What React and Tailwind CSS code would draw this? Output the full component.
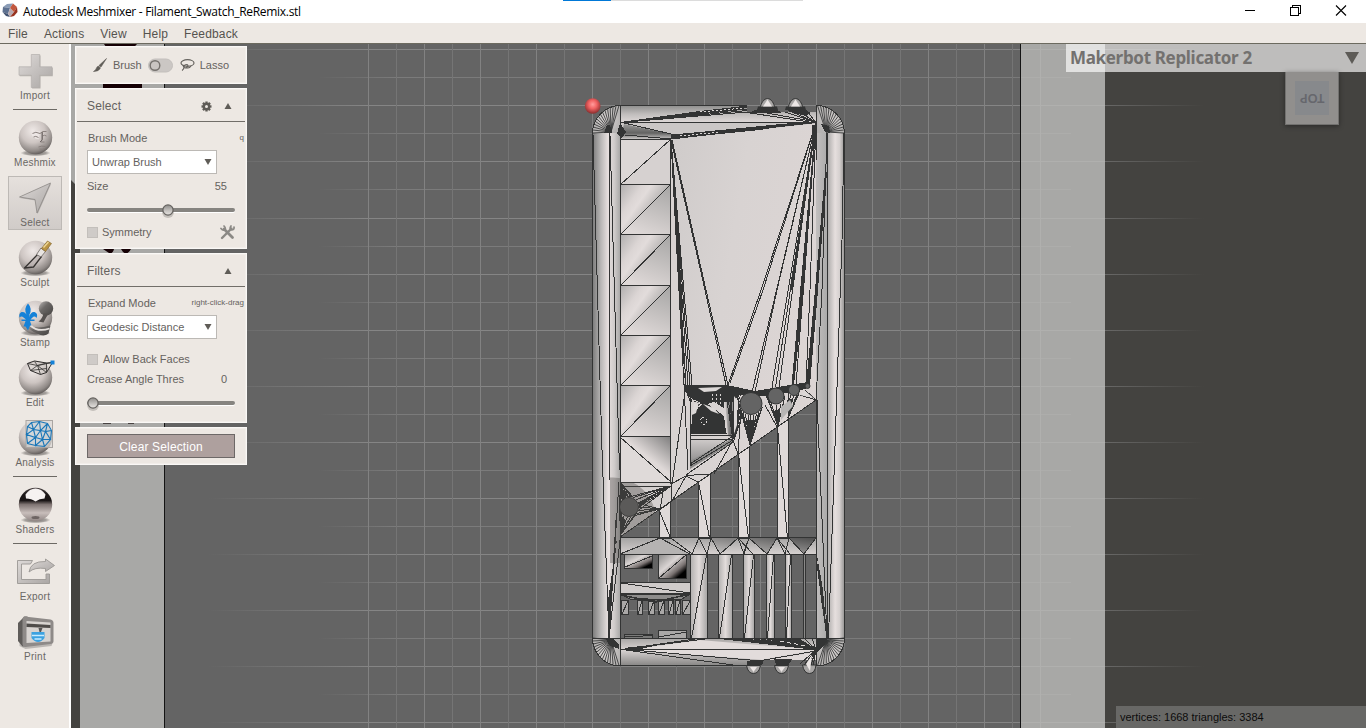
import React from "react";

const INK = "#333434";

/* ---------- mesh helpers ---------- */
const seg = (a) => `M${a[0]} ${a[1]}` + a.slice(2).reduce((s, v, i) => s + (i % 2 ? ` ${v}` : `L${v}`), "");

// n lines from one apex to evenly spaced points between (x1,y1) and (x2,y2)
const fan = (ax, ay, x1, y1, x2, y2, n) => {
  let d = "";
  for (let i = 0; i <= n; i++) {
    const t = i / n;
    d += `M${ax} ${ay}L${(x1 + (x2 - x1) * t).toFixed(1)} ${(y1 + (y2 - y1) * t).toFixed(1)}`;
  }
  return d;
};

// lines from an apex to points on an arc
const arcFan = (ax, ay, cx, cy, r, a0, a1, n) => {
  let d = "";
  for (let i = 0; i <= n; i++) {
    const a = ((a0 + ((a1 - a0) * i) / n) * Math.PI) / 180;
    d += `M${ax} ${ay}L${(cx + r * Math.cos(a)).toFixed(1)} ${(cy + r * Math.sin(a)).toFixed(1)}`;
  }
  return d;
};

const cellTops = [139.5, 184.5, 234.5, 285.5, 335.5, 385.5, 436.5];

const lines = [
  // side rails
  [593, 134, 602, 450, 609, 638],
  [609.5, 133, 609.5, 480],
  [610, 135, 619.5, 470],
  [620.5, 106, 620.5, 666],
  [619, 482, 609, 638],
  [616, 520, 609, 638],
  [620, 540, 609, 638],
  [827.5, 133, 827.5, 638],
  [827, 133, 822, 290, 816, 400],
  [844, 133, 842, 240, 828.5, 638],
  [816.5, 384, 816.5, 666],
  [817, 400, 827, 638],
  [816.5, 560, 827, 638],
  [816.5, 106, 816.5, 160],
  // top bar
  [620, 105.5, 747, 105.5],
  [620, 122.5, 816, 122.5],
  [620, 122, 671, 134],
  [625, 135, 671, 139],
  [620, 139.5, 671, 139.5],
  [747, 112.5, 816, 123],
  [764, 112.5, 816, 122],
  [670.5, 139, 670.5, 484],
  // face
  [671, 140, 705, 290, 726, 385],
  [672, 140, 706, 290, 728, 385],
  [816, 123, 761, 290, 728, 385],
  [816, 123, 763, 290, 730, 383],
  [816, 123, 779, 280, 752, 392],
  [816, 123, 777, 290, 755, 392],
  [816, 123, 810, 290, 806, 384],
  // lower left of the face
  [684, 384, 688, 470],
  [690.5, 390, 690.5, 466],
  [686, 385, 672, 484],
  [690, 439.5, 733, 439.5],
  [690, 435.5, 733, 435.5],
  [690, 466, 733, 440],
  [690, 464, 733, 436],
  [686, 475, 733, 442],
  [733, 440, 714, 474],
  [620, 482.5, 671, 482.5],
  [620, 486.5, 671, 486.5],
  [671, 484, 686, 476, 698, 482],
  [686, 475.5, 710, 474],
  [671, 482, 671, 502],
  [686, 476, 672, 501],
  [620, 437, 671, 482],
  [733, 440, 738, 454],
  [816, 400, 620, 537],
  [660, 510, 664, 486],
  [777, 427, 765, 405],
  [805, 390, 816, 400],
  [800, 395, 816, 400],
  [741, 410, 738, 454],
  // horizontal band
  [620, 537.5, 816, 537.5],
  [620, 554.5, 816, 554.5],
  [620, 554, 660, 538, 690, 554],
  [671, 538, 692, 554, 699, 538, 707, 554, 711, 538, 720, 554, 738, 538, 744, 554, 749, 538, 767, 554, 777, 538, 785, 554, 789, 538, 804, 554, 816, 538],
  [711, 538, 707, 554],
  [738, 538, 753, 554],
  [749, 538, 743, 554],
  [777, 538, 790, 554],
  [720, 554, 735, 541],
  // bottom bar
  [592, 638.5, 844, 638.5],
  [620, 649.5, 816, 649.5],
  [625, 649, 709, 638.5],
  [625, 649, 699, 638.5],
  [626, 650, 740, 666],
  [632, 650, 762, 661],
  [620, 665.5, 747, 665.5],
  [747, 665.5, 764, 660, 816, 651],
];

const upperStruts = [
  [659.5, 670.5, 510, 502],
  [698.5, 710.5, 482, 474],
  [738.5, 749.5, 454, 447],
  [777.5, 788.5, 427, 419],
];
const lowerStruts = [
  [690.5, 707.5],
  [718.5, 732.5],
  [743.5, 754.5],
  [766.5, 774.5],
  [785.5, 791.5],
];
const teeth = [
  [621, 628],
  [637, 642],
  [648, 654],
  [658, 664],
  [668, 673],
  [675, 680],
  [682, 690],
];

const cornerFans = [
  arcFan(611, 132, 620, 133, 27.5, 180, 268, 14),
  arcFan(826, 132, 816.5, 133, 27.5, -88, 0, 14),
  arcFan(611, 640, 620, 638, 27.5, 92, 180, 14),
  arcFan(826, 640, 816.5, 638, 27.5, 0, 88, 14),
].join("");

const denseFans = [
  // slivers in the top bar
  fan(620, 122.5, 747, 106, 747, 112, 4),
  fan(816, 122.5, 671, 135, 671, 139, 4),
  fan(816, 122.5, 785, 112, 816, 113, 4),
  // long face slivers
  fan(671, 140, 684, 385, 692, 385, 4),
  fan(816, 122.5, 772, 387, 779, 387, 2),
  fan(816, 122.5, 792, 385, 796, 385, 1),
  // around the round holes
  arcFan(750, 445, 751, 403, 12, 20, 160, 10),
  arcFan(735, 388, 751, 403, 12, 160, 270, 8),
  arcFan(778, 426, 776, 396, 9, 0, 180, 6),
  arcFan(788, 418, 794, 390, 6, 0, 160, 5),
  arcFan(765, 392, 776, 396, 9, 120, 250, 6),
  arcFan(734, 440, 751, 403, 12, 130, 190, 5),
  arcFan(671, 486, 629, 507, 10, -90, 20, 5),
  arcFan(621, 483, 629, 507, 10, 180, 300, 7),
  arcFan(621, 534, 629, 507, 10, 40, 180, 7),
  arcFan(660, 509, 629, 507, 10, -20, 60, 4),
  // inner pocket
  fan(690, 388, 700, 400, 733, 392, 10),
  fan(728, 386, 690, 396, 700, 410, 7),
  fan(733, 440, 726, 395, 735, 392, 5),
  fan(684, 384, 691, 404, 697, 394, 5),
  // slivers in the bottom bar
  fan(816, 649.5, 720, 638.5, 812, 638.5, 12),
  fan(816, 649.5, 800, 664, 812, 673, 4),
].join("");

function Mesh() {
  return (
    <g>
      {/* surfaces */}
      <path d="M592.5 133A28 28 0 0 1 620 105.5H621V134Z" fill="url(#corner)" />
      <path d="M844.5 133A28 28 0 0 0 816 105.5V134Z" fill="url(#corner)" />
      <path d="M592.5 638A28 28 0 0 0 620 666H621V638Z" fill="url(#corner)" />
      <path d="M844.5 638A28 28 0 0 1 816 666V638Z" fill="url(#corner)" />
      <rect x="592" y="133" width="18" height="506" fill="url(#railL)" />
      <rect x="610" y="133" width="11" height="506" fill="url(#railL2)" />
      <rect x="816" y="133" width="12" height="506" fill="url(#railR2)" />
      <rect x="827" y="133" width="18" height="506" fill="url(#railR)" />
      <path d="M620 105H747V112H816V123H620Z" fill="url(#topBar)" />
      <path d="M620 123H816L671 139H620Z" fill="#cbc7c6" />
      <path d="M624 124L671 134V139H620Z" fill="url(#notch)" />
      <path d="M671 139L816 123V400L620 537V482H671Z" fill="url(#face)" />
      <path d="M671 140H672L690 385L686 476L671 484Z" fill="#d8d3d2" />
      <path d="M690 440H733L690 466Z" fill="url(#pocket)" />
      <path d="M690 461L733 438L732 443L690 469Z" fill="#8a8988" />
      <path d="M724 388H735V438L728 436Z" fill="url(#fold)" />
      {cellTops.map((y, i) => {
        const b = i < 6 ? cellTops[i + 1] : 482;
        return i < 6 ? (
          <g key={y}>
            <rect x="620.5" y={y} width="50" height={b - y} fill={i ? "url(#cellB)" : "#d6d1d0"} />
            <path d={`M620.5 ${y}H670.5L620.5 ${b}Z`} fill={i ? "url(#cellA)" : "#dcd7d6"} />
          </g>
        ) : (
          <g key={y}>
            <rect x="620.5" y={y} width="50" height={b - y} fill="#dfdad9" />
            <path d={`M620.5 ${y}H670.5V${b}Z`} fill="url(#cellC)" />
          </g>
        );
      })}
      <rect x="620" y="538" width="196" height="16" fill="url(#band)" />
      <path d="M620 554L660 538L690 554Z" fill="#b5b3b2" />
      <path d="M749 538H777L767 554ZM711 538H738L720 554ZM789 538H816L804 554Z" fill="url(#facet)" />
      <rect x="620" y="638" width="196" height="22" fill="url(#bottomBar)" />
      <path d="M620 650H816V652L764 660L747 666H620Z" fill="url(#bottomLow)" />
      <path d="M628 650L700 640L816 650L762 660Z" fill="#e2dcdb" />

      {/* lines */}
      <path d={cornerFans} stroke={INK} strokeWidth="0.85" fill="none" />
      <g stroke={INK} fill="none" strokeWidth="1" shapeRendering="crispEdges">
        {upperStruts.map(([a, b, ya, yb]) => (
          <g key={a}>
            <path d={`M${a} ${ya}L${b} ${yb}V538H${a}Z`} fill="#dfd9d8" />
            <path d={a < 660 ? `M${a} 511L${b} 538` : `M${a} ${ya}L${b - 1} 538`} />
          </g>
        ))}
        {lowerStruts.map(([a, b]) => (
          <g key={a}>
            <rect x={a} y="554.5" width={b - a} height="84" fill="url(#strut)" />
            <path d={`M${b - 1} 555L${a + 1} 638`} />
          </g>
        ))}
        <path d="M803.500 555V638M805.500 555V638" />
        <path d="M804.500 555V638" stroke="#8a8988" />
        {teeth.map(([a, b]) => (
          <g key={a}>
            <rect x={a + 0.5} y="600.5" width={b - a} height="14" fill="#aaa8a7" />
            <path d={`M${b} 601L${a + 1} 614`} />
          </g>
        ))}
        <rect x="624.5" y="554.5" width="28" height="14" fill="url(#shade)" />
        <path d="M625 567L652 556" />
        <rect x="658.5" y="554.5" width="28" height="24" fill="url(#shade)" />
        <path d="M659 578L686 555" />
        <rect x="620.5" y="582.5" width="70" height="11" fill="#cfcbca" />
        <path d="M621 583L690 593" />
        <path d="M620 594H690L682 599H630Z" fill="#8d8c8b" />
        <path d="M621 595L640 599L664 600L690 594M640 599L655 602L672 599" strokeWidth="1.6" />
        <rect x="624.5" y="634.5" width="28" height="4" fill="#7b7b7a" />
        <path d="M625 637L652 635.5" />
        <rect x="658.5" y="630.5" width="28" height="8" fill="#aaa8a7" />
        <path d="M659 637L686 632" />
        {cellTops.map((y, i) => (
          <path key={y} d={i < 6 ? `M620.5 ${y}H670.5L620.5 ${cellTops[i + 1]}` : `M620.5 ${y}H670.5`} />
        ))}
        {lines.map((l, i) => (
          <path key={i} d={seg(l)} />
        ))}
        <path d={denseFans} />
        <path d="M592.5 638V133A28 28 0 0 1 620 105.5M844.5 638V133A28 28 0 0 0 816 105.5M592.5 638A28 28 0 0 0 620 666M844.5 638A28 28 0 0 1 816 666" />
      </g>

      {/* densely triangulated parts */}
      <g fill={INK} stroke="none" shapeRendering="crispEdges">
        <path d="M671 148L672 148L680 260L685 385L681 330L677 260Z" />
        <path d="M642 119L700 111L744 106L744 109L700 114L660 120Z" />
        <path d="M680 134L812 121L760 130L671 139Z" />
        <path d="M620 123L626 132L622 138L617 134Z" />
        <path d="M607 125L610 125L612 133L604 133Z" />
        <path d="M812 125H816L815 142L813 144Z" />
        <path d="M825 132L821 124L829 126L830 133Z" />
        <path d="M605 638H612L619 645V649L610 646Z" />
        <path d="M816 638H828L824 646L817 652Z" />
        <path d="M815 130L789.500 290H792.500Z" />
        <path d="M815.500 135L801 290L792 385H794L804 290Z" />
        <path d="M825 172H827L818 290L810 385H806L815 290Z" />
        <path d="M685 385H727L755 391L808 382V388L795 392L765 396L740 395L732 402H724V408L714 402L704 405L690 397Z" />
        <path d="M692 414L705 402L724 416L726 432L727 434H691Z" />
        <path d="M746 420L749 445L756 420Z" />
        <path d="M774 411L778 425L779 409Z" />
        <path d="M787 400L789 418L792 399Z" />
        <path d="M620 485L627 495L622 504Z" />
        <path d="M638 503L665 489L648 500L640 507Z" />
        <path d="M621 516L626 520L621 533Z" />
        <path d="M730 403L733 418L733 436L731 418Z" />
        <path d="M617 538L611 600L609 636L608 600Z" />
        <path d="M817 555L821 600L827 636L823 590Z" />
        <path d="M624 648L668 643L631 651Z" />
        <path d="M765 639H800L808 644L815 650Z" />
        <path d="M758 109L776 109L782 113H748Z" />
        <path d="M786 109L804 109L811 113L806 116L790 112Z" />
        <path d="M747 661L764 660L762 665H747Z" />
        <path d="M774 659H792L788 666H777Z" />
      </g>
      <g fill="#dcd8d7" stroke="none">
        <path d="M698 388L722 387L716 391L704 392ZM703 404L714 408L719 414L711 411ZM694 404L699 402L696 413L692 415ZM734 396L737 400L737 425L734 434Z" />
        <path d="M781 407L790 400L793 406L781 420Z" fill="#b7b5b4" />
        <path d="M805 391L814 398L800 395Z" />
      </g>
      <g stroke="#d9d5d4" strokeWidth="1" fill="none" strokeDasharray="2 2" shapeRendering="crispEdges">
        <path d="M702 417L708 420L704 425L700 421Z" />
        <path d="M712 394V404M716 394V405M720 394V404" />
        <path d="M700 112L744 108M680 136L720 132" />
        <path d="M780 641L806 646" strokeDasharray="4 3" />
      </g>

      {/* small nubs on the upper and lower edges */}
      <g stroke={INK}>
        <path d="M760 108.500C761 103 764 98.500 767.500 98.500S774 103 775 108.500Z" fill="#a8a6a5" />
        <path d="M788 108.500C789 103 792 98.500 795.500 98.500S802 103 803 108.500Z" fill="#a8a6a5" />
        <path d="M746.500 665.500H760.500Q759 673.500 753.500 673.500T746.500 665.500Z" fill="#a8a6a5" />
        <path d="M774.500 665.500H788.500Q787 673.500 781.500 673.500T774.500 665.500Z" fill="#a8a6a5" />
        <path d="M802.500 665H816Q815 673.500 809.500 673.500T802.500 665Z" fill="#a8a6a5" />
      </g>
      <path d="M758 106.500H777L778 110H757ZM786 106.500H805L806 110H785Z" fill={INK} />
      <path d="M767.500 99.500L772 106.500H763ZM795.500 99.500L800 106.500H791ZM750 667H757L753.500 672ZM778 667H785L781.500 672ZM806 664L812 655L810 671Z" fill="#ebe6e5" />

      {/* holes seen through the plate */}
      <g fill="#646464" stroke={INK}>
        <circle cx="751" cy="403.5" r="11" />
        <circle cx="776" cy="396" r="8" />
        <circle cx="794" cy="390" r="5.5" />
        <circle cx="807.5" cy="386" r="2.5" />
        <circle cx="629" cy="507" r="9.5" />
      </g>

      {/* brush footprint */}
      <circle cx="613" cy="520.5" r="43" fill="#4a4846" fillOpacity="0.36" clipPath="url(#brushArea)" />
    </g>
  );
}

function Stop({ o, c, a = 1 }) {
  return <stop offset={o} stopColor={c} stopOpacity={a} />;
}

function Scene() {
  const hs = Array.from({ length: 25 }, (_, i) => Math.round(49.2 + i * 28.05));
  const vs = Array.from({ length: 25 }, (_, i) => Math.round(368 + i * 27.98));
  return (
    <svg className="absolute inset-0 h-full w-full" viewBox="71 44 1295 684" preserveAspectRatio="none">
      <defs>
        <linearGradient id="major" gradientUnits="userSpaceOnUse" x1="208" y1="0" x2="1204" y2="0">
          <Stop o="0" c="#858585" a={0} /><Stop o=".16" c="#858585" /><Stop o=".82" c="#858585" /><Stop o="1" c="#858585" a={0} />
        </linearGradient>
        <linearGradient id="minor" gradientUnits="userSpaceOnUse" x1="318" y1="0" x2="1090" y2="0">
          <Stop o="0" c="#7b7b7b" a={0} /><Stop o=".1" c="#7b7b7b" /><Stop o=".9" c="#7b7b7b" /><Stop o="1" c="#7b7b7b" a={0} />
        </linearGradient>
        <linearGradient id="railL"><Stop o="0" c="#777" /><Stop o=".5" c="#b9b7b6" /><Stop o=".9" c="#e7e0df" /></linearGradient>
        <linearGradient id="railL2"><Stop o="0" c="#dfd9d8" /><Stop o=".4" c="#cfcbca" /><Stop o="1" c="#a3a2a1" /></linearGradient>
        <linearGradient id="railR2"><Stop o="0" c="#c2bfbe" /><Stop o="1" c="#a9a9a9" /></linearGradient>
        <linearGradient id="railR"><Stop o="0" c="#a9a8a7" /><Stop o=".45" c="#e6dfde" /><Stop o=".7" c="#d5d0cf" /><Stop o="1" c="#8d8c8b" /></linearGradient>
        <linearGradient id="topBar" x2="0" y2="1"><Stop o="0" c="#8b8b8a" /><Stop o=".5" c="#c0bdbc" /><Stop o="1" c="#e0dad9" /></linearGradient>
        <linearGradient id="notch" x2="0" y2="1"><Stop o="0" c="#9a9998" /><Stop o=".6" c="#636362" /><Stop o="1" c="#c9c6c5" /></linearGradient>
        <linearGradient id="face" x2="1" y2=".35"><Stop o="0" c="#c9c6c5" /><Stop o=".6" c="#d8d3d2" /><Stop o="1" c="#dcd5d4" /></linearGradient>
        <linearGradient id="cellA" x2="1" y2=".7"><Stop o="0" c="#b0aeae" /><Stop o=".3" c="#dbd5d4" /><Stop o=".42" c="#e2dcdb" /><Stop o=".72" c="#aeacab" /></linearGradient>
        <linearGradient id="cellB" x1=".8" y1="0" x2=".4" y2="1"><Stop o="0" c="#a9a8a7" /><Stop o="1" c="#ded8d7" /></linearGradient>
        <linearGradient id="cellC" x1="1" y1="0" x2=".3" y2=".8"><Stop o="0" c="#7f7e7e" /><Stop o=".6" c="#dfd9d8" /></linearGradient>
        <linearGradient id="pocket" x2="0" y2="1"><Stop o="0" c="#cdc9c8" /><Stop o="1" c="#858484" /></linearGradient>
        <linearGradient id="fold"><Stop o="0" c="#dcd7d6" /><Stop o=".6" c="#6d6c6c" /><Stop o="1" c="#c6c3c2" /></linearGradient>
        <linearGradient id="band" x2="0" y2="1"><Stop o="0" c="#a5a4a3" /><Stop o="1" c="#d6d1d0" /></linearGradient>
        <linearGradient id="facet" x1="0" y1="1" x2="1" y2="0"><Stop o="0" c="#c8c5c4" /><Stop o="1" c="#4e4e4e" /></linearGradient>
        <linearGradient id="bottomBar" x2="0" y2="1"><Stop o="0" c="#a6a4a3" /><Stop o=".6" c="#dfd9d8" /></linearGradient>
        <linearGradient id="bottomLow" x2="0" y2="1"><Stop o="0" c="#d8d3d2" /><Stop o="1" c="#858483" /></linearGradient>
        <linearGradient id="strut"><Stop o="0" c="#b2b0af" /><Stop o=".5" c="#e2dcdb" /><Stop o="1" c="#a5a4a3" /></linearGradient>
        <linearGradient id="shade" x2="1" y2="1"><Stop o="0" c="#8b8a89" /><Stop o=".4" c="#dad5d4" /><Stop o=".66" c="#77706f" /><Stop o=".82" c="#000" /></linearGradient>
        <radialGradient id="corner"><Stop o="0" c="#dcd7d6" /><Stop o="1" c="#b4b2b1" /></radialGradient>
        <radialGradient id="red" cx=".5" cy=".4" r=".58"><Stop o="0" c="#ff9c9c" /><Stop o=".45" c="#f26464" /><Stop o="1" c="#8d2f2f" /></radialGradient>
        <clipPath id="brushArea"><path d="M610 470H620V482H671V502L620 537V563H610Z" /></clipPath>
      </defs>
      <rect x="71" y="44" width="1295" height="684" fill="#444340" />
      <path d="M71 44H164V728H80V189L71 180Z" fill="#a8a8a6" />
      <path d="M104 44H137Q134 48 130 48H110Q106 48 104 44ZM103 84H142V88H103ZM103 249H114Q113 254 109 253ZM121 249H131Q127 256 123 252Z" fill="#150004" />
      <path d="M103 422H111V424H103ZM128 422H134V424H128Z" fill="#4a4443" />
      <rect x="164" y="44" width="857" height="684" fill="#141414" />
      <rect x="165" y="44" width="855" height="684" fill="#646464" />
      {hs.map((y, i) => (
        <rect key={y} x={i % 2 ? 318 : 208} y={y} width={i % 2 ? 772 : 996} height="1" fill={i % 2 ? "url(#minor)" : "url(#major)"} />
      ))}
      {vs.map((x, i) => (
        <rect key={x} x={x} y="44" width="1" height="684" fill={i % 2 ? "#757575" : "#828282"} />
      ))}
      <rect x="1021" y="44" width="84" height="684" fill="#a8a8a6" />
      {hs.map((y, i) => (
        <rect key={y} x="1021" y={y} width={i % 2 ? 50 : 84} height="1" fill={i % 2 ? "#adadab" : "#b0b0ae"} />
      ))}
      <rect x="1040" y="44" width="1" height="684" fill="#b0b0ae" />
      <rect x="1020" y="44" width="1" height="684" fill="#141414" />
      <Mesh />
      <circle cx="592.7" cy="106" r="7.8" fill="url(#red)" />
    </svg>
  );
}

/* ---------- toolbar icons ---------- */
function IconDefs() {
  return (
    <svg className="absolute h-0 w-0">
      <defs>
        <radialGradient id="ball" cx=".42" cy=".3" r=".72"><Stop o="0" c="#efe9e7" /><Stop o=".5" c="#cdc5c2" /><Stop o=".85" c="#8f8986" /><Stop o="1" c="#5f5a58" /></radialGradient>
        <linearGradient id="steel" x2="1" y2="1"><Stop o="0" c="#dedad8" /><Stop o="1" c="#aaa6a4" /></linearGradient>
        <linearGradient id="dark" x2="1" y2="1"><Stop o="0" c="#bdb9b7" /><Stop o=".4" c="#6c6967" /><Stop o="1" c="#454341" /></linearGradient>
        <linearGradient id="chrome" x2="0" y2="1"><Stop o="0" c="#4c4444" /><Stop o=".2" c="#1b1616" /><Stop o=".38" c="#1b1616" /><Stop o=".5" c="#7f7472" /><Stop o=".75" c="#c8bebb" /><Stop o="1" c="#8f8583" /></linearGradient>
        <linearGradient id="knob" x2="0" y2="1"><Stop o="0" c="#8f8d8a" /><Stop o=".6" c="#c8c5c2" /><Stop o="1" c="#e8e5e2" /></linearGradient>
        <radialGradient id="shadow"><Stop o="0" c="#4e4a48" a={0.75} /><Stop o=".7" c="#4e4a48" a={0.45} /><Stop o="1" c="#4e4a48" a={0} /></radialGradient>
      </defs>
    </svg>
  );
}

function Ball({ children, fill = "url(#ball)" }) {
  return (
    <svg className="block shrink-0" width="44" height="40" viewBox="-0.500 -1.500 44 40">
      <ellipse cx="22" cy="33.500" rx="15" ry="3.200" fill="url(#shadow)" />
      <circle cx="22" cy="18" r="16.700" fill={fill} />
      {children}
    </svg>
  );
}

const Flat = ({ children }) => (
  <svg className="block shrink-0" width="44" height="40" viewBox="-0.500 -1 44 40">{children}</svg>
);

const icons = {
  Import: (
    <Flat>
      <path d="M17.800 2.500H26.200V14.800H38.500V23.200H26.200V35.500H17.800V23.200H5.500V14.800H17.800Z" transform="translate(.8 1)" fill="#8d8986" opacity=".55" />
      <path d="M17.800 2.500H26.200V14.800H38.500V23.200H26.200V35.500H17.800V23.200H5.500V14.800H17.800Z" fill="url(#steel)" stroke="#b3afac" strokeWidth=".7" />
    </Flat>
  ),
  Meshmix: (
    <Ball>
      <path d="M18 15Q21 10 27 12L25 20L22 19Q19 18 18 15Z" fill="#efe9e7" opacity=".8" />
      <path d="M19 14Q22 11.500 26.500 14Q29 11 33 12M20 17.500Q22 16 25 18M29 12.500V20L27 22.500H31M29 16.500Q31 15 33 16.500M25 27.500Q28 26 32 27M26 29.500Q29 30.500 31 29" fill="none" stroke="#8a817e" strokeWidth="1" />
      <path d="M28.500 13V20.500L26.500 22.500" stroke="#6f6866" fill="none" />
    </Ball>
  ),
  Select: (
    <Flat>
      <path d="M37 4L6 18L21.500 20.500L23.500 34Z" transform="translate(.6 1)" fill="#8a8683" opacity=".5" />
      <path d="M37 4L6 18L21.500 20.500L23.500 34Z" fill="url(#steel)" stroke="#8c8885" strokeWidth=".8" strokeLinejoin="round" />
    </Flat>
  ),
  Sculpt: (
    <Ball>
      <path d="M11 28.500L25 14L28 17L20 27.500Z" fill="#b6aeab" fillOpacity=".6" stroke="#373432" strokeWidth="1.300" strokeLinejoin="round" />
      <path d="M23 15L27.500 8.500L32 12L27.500 17.500Z" fill="#e8e4e1" stroke="#6a6562" strokeWidth=".8" />
      <path d="M28 9L34 1.500L38 4L32 12Z" fill="#b99345" stroke="#7c5f25" strokeWidth=".6" />
      <path d="M30 8L35 2.500" stroke="#eed795" strokeWidth="1.400" />
    </Ball>
  ),
  Stamp: (
    <Ball>
      <circle cx="32.500" cy="9" r="7.200" fill="url(#dark)" />
      <path d="M30 14L35 14Q32 19 30 23L25 22Q29 19 30 14Z" fill="#55514f" />
      <path d="M15 24Q20 31 37 26L35 34Q30 38 24 34Q16 31 13 26Z" fill="url(#dark)" />
      <path d="M17 26Q24 33 36 29" stroke="#e5e0dd" strokeWidth="1.800" fill="none" />
      <path d="M14.500 4Q10 9 13 15L14 18Q13 12 8 12.500Q5 14 6 18Q8 16 10 18L12.500 20H8V21.500H12L10 27H12L14.500 31L16.500 26H18L16.500 21.500H21V20H17L19 18Q21 16 23 18.500Q25 14 21 12.500Q17 12 15.500 18L16 15Q19 9 14.500 4Z" fill="#1582d8" />
    </Ball>
  ),
  Edit: (
    <Ball>
      <path d="M14 4L21 1.500L33 3.500L39 3L33 13L27 15L17 11Z" fill="#d5cfcc" fillOpacity=".5" stroke="#302e2d" strokeWidth="1" />
      <path d="M14 4L24 6L39 3M21 2L24 6L33 3.500M24 6L17 11M24 6L27 15M24 6L33 13M33 3.500L33 13M17 11L33 9" fill="none" stroke="#302e2d" strokeWidth=".8" />
      <rect x="37" y="1" width="4" height="4" fill="#1582d8" />
    </Ball>
  ),
  Analysis: (
    <Ball>
      <rect x="12.500" y="1" width="26.500" height="27" fill="#dcd8d5" fillOpacity=".7" stroke="#a9a5a2" />
      <circle cx="25.500" cy="14.500" r="12" fill="#c7d3dc" fillOpacity=".5" />
      <path d="M18 3L26 2L34 4L38 11L37 20L31 27L22 26L14 24L13 15L14 7ZM18 3L20 10L14 7M26 2L27 11L20 10L13 15L22 18L27 11L34 4M34 4L32 12L38 11M27 11L32 12L37 20L29 20L27 11M22 18L29 20L31 27M22 18L22 26L29 20M22 18L14 24M20 10L26 2M32 12L29 20M20 10L22 18" fill="none" stroke="#1976b8" strokeWidth="1.100" />
    </Ball>
  ),
  Shaders: (
    <Ball fill="url(#chrome)">
      <path d="M12 8Q16 2 22 2Q28 2 32 8L31 12Q26 12 22 15Q18 12 12.500 12Z" fill="#f6f2f1" />
      <ellipse cx="22" cy="31" rx="4" ry="1.500" fill="#6d6462" />
    </Ball>
  ),
  Export: (
    <Flat>
      <path d="M19 7.500H4V30.500H36V21H32.500V26.500H8V11H17Z" fill="url(#steel)" stroke="#9b9794" strokeWidth=".9" />
      <path d="M15.500 19Q17 8 32 8.500V6L41 12.500L32 18.500V15.500Q21 14 15.500 19Z" fill="url(#steel)" stroke="#9b9794" strokeWidth=".9" />
    </Flat>
  ),
  Print: (
    <Flat>
      <path d="M6 33L12 36L38 33L39 30H6Z" fill="#8a8683" opacity=".5" />
      <path d="M4.500 10L11 3.500H14V33L9 33.500L4.500 28Z" fill="#5f5c5a" />
      <path d="M11 3.500L37 6.500Q40 7 40 10V28Q40 30.500 37 31L12 34Q9 34 9 31V7Q9 3.500 11 3.500Z" fill="#8e8a88" />
      <path d="M13 8L37 9.500V28.500L13 30Z" fill="#d8d4d1" />
      <path d="M13 10.500L37 12V15L13 14Z" fill="#4f4c4a" />
      <path d="M25 15H29L27.500 19H26Z" fill="#555" />
      <path d="M18 19H31V25Q28 29 24.500 29T18 25Z" fill="#3da2e0" />
      <path d="M18.500 22.500H30.500M21 26H28" stroke="#c8ecff" strokeWidth="1.400" />
    </Flat>
  ),
};

function Tool({ name, active, cls = "h-[60px]" }) {
  return (
    <div className={`flex w-full flex-col items-center ${cls}`}>
      <div className={`flex h-[54px] w-[54px] flex-col items-center pt-[2px] ${active ? "bg-gradient-to-b from-[#e6e1dd] to-[#d0cbc8] outline outline-1 -outline-offset-1 outline-[#bdb9b5]" : ""}`}>
        {icons[name]}
        <span className="-mt-[1px] whitespace-nowrap pl-px text-[10px] leading-[11px] tracking-[0.25px] text-[#6a6764]">{name}</span>
      </div>
    </div>
  );
}

const Rule = () => <div className="h-px w-[44px] shrink-0 bg-[#6c6964]" />;

function Sidebar() {
  return (
    <nav className="flex w-[71px] shrink-0 flex-col items-center border-r-2 border-white bg-[#ede8e3] pt-[5px]">
      <Tool name="Import" cls="h-[60px]" />
      <Rule />
      <Tool name="Meshmix" cls="mt-[6px] h-[60px]" />
      <Tool name="Select" active />
      <Tool name="Sculpt" />
      <Tool name="Stamp" />
      <Tool name="Edit" />
      <Tool name="Analysis" />
      <Rule />
      <Tool name="Shaders" cls="mt-[6px] h-[60px]" />
      <Rule />
      <Tool name="Export" cls="mt-[6px] h-[60px]" />
      <Tool name="Print" />
    </nav>
  );
}

/* ---------- property panels ---------- */
const Down = () => (
  <svg width="8" height="8" viewBox="0 0 8 8"><path d="M.5 1H7.500L4 7Z" fill="#5f5c57" /></svg>
);
const Up = () => (
  <svg width="8" height="8" viewBox="0 0 8 8"><path d="M.5 7H7.500L4 1Z" fill="#5f5c57" /></svg>
);

function Combo({ children }) {
  return (
    <div className="flex h-6 w-[130px] items-center justify-between border border-[#bcb9b5] bg-white pl-1 pr-1">
      <span>{children}</span>
      <Down />
    </div>
  );
}

function Slider({ value }) {
  return (
    <div className="flex h-4 w-[148px] items-center">
      <div className="relative h-1 w-full rounded-full bg-[#868480] shadow-[0_1px_0_#fff]">
        <svg className="absolute -top-[5px] overflow-visible" style={{ left: value }} width="12" height="14" viewBox="0 0 12 14">
          <ellipse cx="6" cy="9" rx="6" ry="6" fill="#6a6764" opacity=".3" />
          <circle cx="6" cy="7" r="5.100" fill="url(#knob)" stroke="#65625f" strokeWidth="1.200" />
        </svg>
      </div>
    </div>
  );
}

const Box = () => <div className="h-[11px] w-[11px] border border-[#c3bfbb] bg-[#cfcbc8]" />;
const panel = "w-[172px] shrink-0 border border-[#faf8f6] bg-[#ede8e3] shadow-[inset_0_0_0_1px_#f2eeea]";

function Panels() {
  return (
    <div className="absolute left-[4px] top-[2px] flex flex-col text-[11px] leading-[14px] text-[#65625e]">
      <section className={`${panel} mb-[4px] flex h-[38px] items-center pl-[17px]`}>
        <svg className="mr-[6px]" width="14" height="14" viewBox="0 0 14 14">
          <path d="M13.500 .5L8 9L6 7.500ZM5.500 8L7.500 10Q6 13.500 .5 13.500Q3 12 3.500 10Q4 8.500 5.500 8Z" fill="#5f5c57" stroke="#5f5c57" strokeWidth=".6" />
        </svg>
        <span>Brush</span>
        <svg className="ml-[6px] mr-[7px]" width="25" height="15" viewBox="0 0 25 15">
          <rect x=".5" y="1" width="24" height="13" rx="6.500" fill="#cbc7c4" stroke="#c3bfbc" />
          <circle cx="7" cy="7.500" r="4.800" fill="#c9c5c2" stroke="#75726e" strokeWidth="1.400" />
        </svg>
        <svg className="mr-[5px]" width="15" height="12" viewBox="0 0 15 12" fill="none" stroke="#65625e" strokeWidth="1.200">
          <ellipse cx="7.500" cy="4" rx="6.500" ry="3.300" />
          <path d="M3 6Q4 10 6.500 8.500Q9 6.500 7 5.500Q4 5.500 4 8Q4 10.500 2 11.500M6 8.500Q9 10 11 7" />
        </svg>
        <span>Lasso</span>
      </section>

      <section className={`${panel} mb-[4px] flex h-[161px] flex-col`}>
        <div className="mx-[1px] flex h-[33px] shrink-0 items-center border-b border-[#716e69] pl-[10px] pr-[13px] pt-[2px] text-[12px]">
          <span className="flex-1 tracking-[0.15px]">Select</span>
          <svg className="mr-[12px]" width="11" height="11" viewBox="-5.500 -5.500 11 11">
            <g fill="#5f5c57">
              {[0, 45, 90, 135].map((a) => (
                <rect key={a} x="-1.200" y="-5" width="2.400" height="10" transform={`rotate(${a})`} />
              ))}
              <circle r="3.700" />
            </g>
            <circle r="1.500" fill="#ede8e3" />
          </svg>
          <Up />
        </div>
        <div className="mt-[9px] flex h-[14px] shrink-0 items-center justify-between pl-[12px] pr-[2px]">
          <span>Brush Mode</span><span className="text-[8px]">q</span>
        </div>
        <div className="mt-[5px] pl-[11px]"><Combo>Unwrap Brush</Combo></div>
        <div className="mt-[5px] flex justify-between pl-[11px] pr-[19px]"><span>Size</span><span>55</span></div>
        <div className="mt-[9px] pl-[11px]"><Slider value={75} /></div>
        <div className="mt-[6px] flex h-4 items-center pl-[11px] pr-[11px]">
          <Box /><span className="ml-[4px] flex-1">Symmetry</span>
          <svg width="15" height="15" viewBox="0 0 15 15" fill="none" stroke="#8b8985" strokeLinecap="round">
            <path d="M4 4L12.500 12.500" strokeWidth="2.800" />
            <path d="M11.500 3.500L2 13" strokeWidth="2.400" />
            <path d="M1 3.500Q3 6 5 4.500Q6 3 4 1M14 2Q14.500 5 11.500 5Q9 4 11 1" strokeWidth="1.700" />
          </svg>
        </div>
      </section>

      <section className={`${panel} mb-[4px] flex h-[170px] flex-col`}>
        <div className="mx-[1px] flex h-[33px] shrink-0 items-center border-b border-[#716e69] pl-[10px] pr-[13px] pt-[2px] text-[12px]">
          <span className="flex-1 tracking-[0.15px]">Filters</span><Up />
        </div>
        <div className="mt-[9px] flex h-[14px] shrink-0 items-center justify-between pl-[12px] pr-[2px]">
          <span>Expand Mode</span><span className="text-[8px]">right-click-drag</span>
        </div>
        <div className="mt-[5px] pl-[11px]"><Combo>Geodesic Distance</Combo></div>
        <div className="mt-[12px] flex h-4 items-center pl-[11px]"><Box /><span className="ml-[5px]">Allow Back Faces</span></div>
        <div className="mt-[5px] flex justify-between pl-[11px] pr-[19px]"><span>Crease Angle Thres</span><span>0</span></div>
        <div className="mt-[9px] pl-[11px]"><Slider value={0} /></div>
      </section>

      <section className={`${panel} flex h-[38px] items-center justify-center`}>
        <button className="h-6 w-[148px] border border-[#6d6867] bg-[#aea09e] pt-[2px] text-[12px] tracking-[0.15px] text-white">Clear Selection</button>
      </section>
    </div>
  );
}

export default function App() {
  return (
    <div className="flex h-[728px] w-[1366px] flex-col overflow-hidden bg-[#ede8e3] font-['Liberation_Sans',Arial,sans-serif]">
      <IconDefs />
      <header className="relative flex h-[23px] shrink-0 items-center bg-white pl-[2px]">
        <div className="absolute left-[563px] top-0 flex h-px w-[240px] bg-[#dcdcdc]"><div className="w-[48px] bg-[#0078d7]" /></div>
        <svg className="mr-[5px] -mt-[2px]" width="16" height="15" viewBox="0 0 16 15">
          <path d="M5 1L11 .500L8 5L1 4Z" fill="#8a9cb6" /><path d="M1 4L8 5L6 11L.500 9Z" fill="#5e7190" />
          <path d="M.500 9L6 11L8 14L4 13Z" fill="#40516f" /><path d="M8 5L12 9L8 14L6 11Z" fill="#b7aab0" />
          <path d="M11 .500L15 4L12 9L8 5Z" fill="#c3583f" /><path d="M15 4L15.500 9L12 13L8 14L12 9Z" fill="#983320" />
        </svg>
        <span className="flex-1 pt-px font-['Open_Sans','Noto_Sans',sans-serif] text-[12px] leading-[22px] tracking-[-0.3px] text-black">Autodesk Meshmixer - Filament_Swatch_ReRemix.stl</span>
        <svg className="mr-[19px] -mt-[2px]" width="102" height="11" viewBox="0 0 102 11" fill="none" stroke="#000">
          <path d="M0 5.500H10" shapeRendering="crispEdges" />
          <path d="M45.500 2.500H53.500V10.500H45.500ZM47.500 2.500V.500H55.500V8.500H53.500" shapeRendering="crispEdges" />
          <path d="M91 .500L101 10.500M101 .500L91 10.500" strokeWidth="1.100" />
        </svg>
      </header>
      <div className="flex h-[21px] shrink-0 items-center gap-[16px] border-b border-[#6c6a5f] pl-[8px] pt-px text-[12px] tracking-[0.15px] text-[#55534f]">
        <span>File</span><span>Actions</span><span>View</span><span>Help</span><span>Feedback</span>
      </div>
      <div className="flex min-h-0 flex-1">
        <Sidebar />
        <main className="relative flex-1">
          <Scene />
          <Panels />
          <div className="absolute right-0 top-0 flex h-[28px] w-[300px] items-center justify-between bg-white/65 pl-[4px] pr-[7px]">
            <span className="whitespace-nowrap font-['Noto_Sans','Open_Sans',sans-serif] text-[17px] font-bold tracking-[-0.32px] text-[#73716f]">Makerbot Replicator 2</span>
            <svg width="14" height="12" viewBox="0 0 14 12"><path d="M0 0H14L7 12Z" fill="#5d5b57" /></svg>
          </div>
          <div className="absolute right-[27px] top-[28px] flex h-[53px] w-[54px] items-center justify-center border border-t-0 border-[#72716f] bg-[#918f8d] shadow-[0_1px_5px_rgba(0,0,0,.4)]">
            <div className="flex h-[34px] w-[34px] items-center justify-center bg-[#87898c]">
              <span className="rotate-180 font-['Noto_Sans',sans-serif] text-[13px] font-semibold leading-none tracking-[-0.3px] text-[#66676d]">TOP</span>
            </div>
          </div>
          <div className="absolute bottom-0 right-0 flex h-[22px] w-[250px] items-center bg-[#686866] pl-[4px] text-[11px] text-[#0c0c0c]">vertices: 1668 triangles: 3384</div>
        </main>
      </div>
    </div>
  );
}
